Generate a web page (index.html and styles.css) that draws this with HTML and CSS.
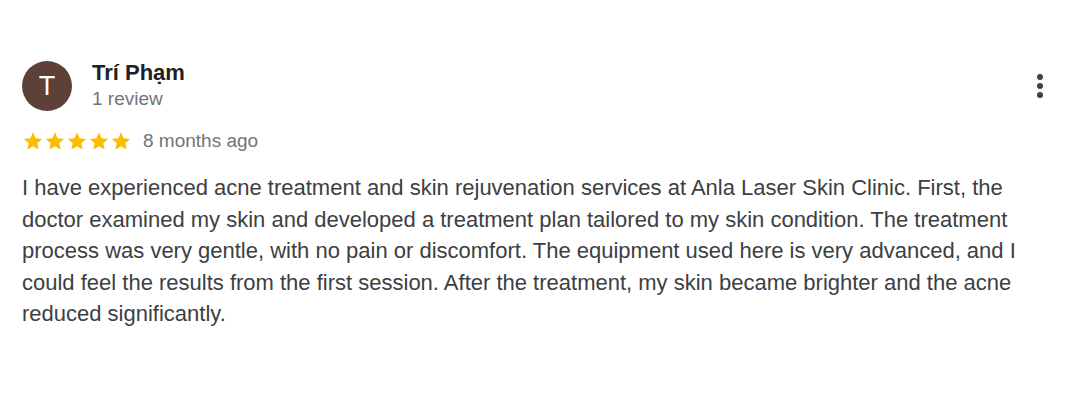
FILE: index.html
```html
<!DOCTYPE html>
<html>
<head>
<meta charset="utf-8">
<link rel="stylesheet" href="styles.css">
</head>
<body>
<div class="review">
  <div class="header">
    <div class="avatar">T</div>
    <div class="who">
      <div class="name">Trí Phạm</div>
      <div class="count">1 review</div>
    </div>
    <div class="more">
      <svg width="8" height="26" viewBox="0 0 8 26"><circle cx="4" cy="4" r="3" fill="#3c4043"/><circle cx="4" cy="13" r="3" fill="#3c4043"/><circle cx="4" cy="22" r="3" fill="#3c4043"/></svg>
    </div>
  </div>
  <div class="meta">
    <div class="stars">
      <svg viewBox="0 0 24 24" class="star"><path d="M12 2.5l2.9 6.6 7.1.6-5.4 4.7 1.6 7-6.2-3.7-6.2 3.7 1.6-7L2 9.7l7.1-.6z" fill="#fbbc04"/></svg>
      <svg viewBox="0 0 24 24" class="star"><path d="M12 2.5l2.9 6.6 7.1.6-5.4 4.7 1.6 7-6.2-3.7-6.2 3.7 1.6-7L2 9.7l7.1-.6z" fill="#fbbc04"/></svg>
      <svg viewBox="0 0 24 24" class="star"><path d="M12 2.5l2.9 6.6 7.1.6-5.4 4.7 1.6 7-6.2-3.7-6.2 3.7 1.6-7L2 9.7l7.1-.6z" fill="#fbbc04"/></svg>
      <svg viewBox="0 0 24 24" class="star"><path d="M12 2.5l2.9 6.6 7.1.6-5.4 4.7 1.6 7-6.2-3.7-6.2 3.7 1.6-7L2 9.7l7.1-.6z" fill="#fbbc04"/></svg>
      <svg viewBox="0 0 24 24" class="star"><path d="M12 2.5l2.9 6.6 7.1.6-5.4 4.7 1.6 7-6.2-3.7-6.2 3.7 1.6-7L2 9.7l7.1-.6z" fill="#fbbc04"/></svg>
    </div>
    <span class="time">8 months ago</span>
  </div>
  <p class="text">I have experienced acne treatment and skin rejuvenation services at Anla Laser Skin Clinic. First, the doctor examined my skin and developed a treatment plan tailored to my skin condition. The treatment process was very gentle, with no pain or discomfort. The equipment used here is very advanced, and I could feel the results from the first session. After the treatment, my skin became brighter and the acne reduced significantly.</p>
</div>
</body>
</html>
```

FILE: styles.css
```css
html, body {
  margin: 0;
  padding: 0;
  background: #ffffff;
}
body {
  font-family: "Liberation Sans", Arial, sans-serif;
  color: #3c4043;
}
.review {
  padding: 61px 36px 0 22px;
}
.header {
  display: flex;
  align-items: flex-start;
}
.avatar {
  width: 50px;
  height: 50px;
  border-radius: 50%;
  background: #5d4037;
  color: #ffffff;
  font-size: 27px;
  display: flex;
  align-items: center;
  justify-content: center;
  flex-shrink: 0;
}
.who {
  margin-left: 20px;
  flex: 1;
}
.name {
  font-weight: bold;
  font-size: 22px;
  color: #202124;
  line-height: 24px;
}
.count {
  font-size: 19px;
  color: #70757a;
  line-height: 24px;
  margin-top: 2px;
}
.more {
  margin-top: 12px;
}
.meta {
  display: flex;
  align-items: center;
  margin-top: 19px;
}
.stars {
  display: flex;
}
.star {
  width: 22px;
  height: 22px;
}
.time {
  margin-left: 11px;
  font-size: 19px;
  color: #70757a;
}
.text {
  margin: 20px 0 0 0;
  font-size: 22px;
  line-height: 31.6px;
  color: #3c4043;
}
```
